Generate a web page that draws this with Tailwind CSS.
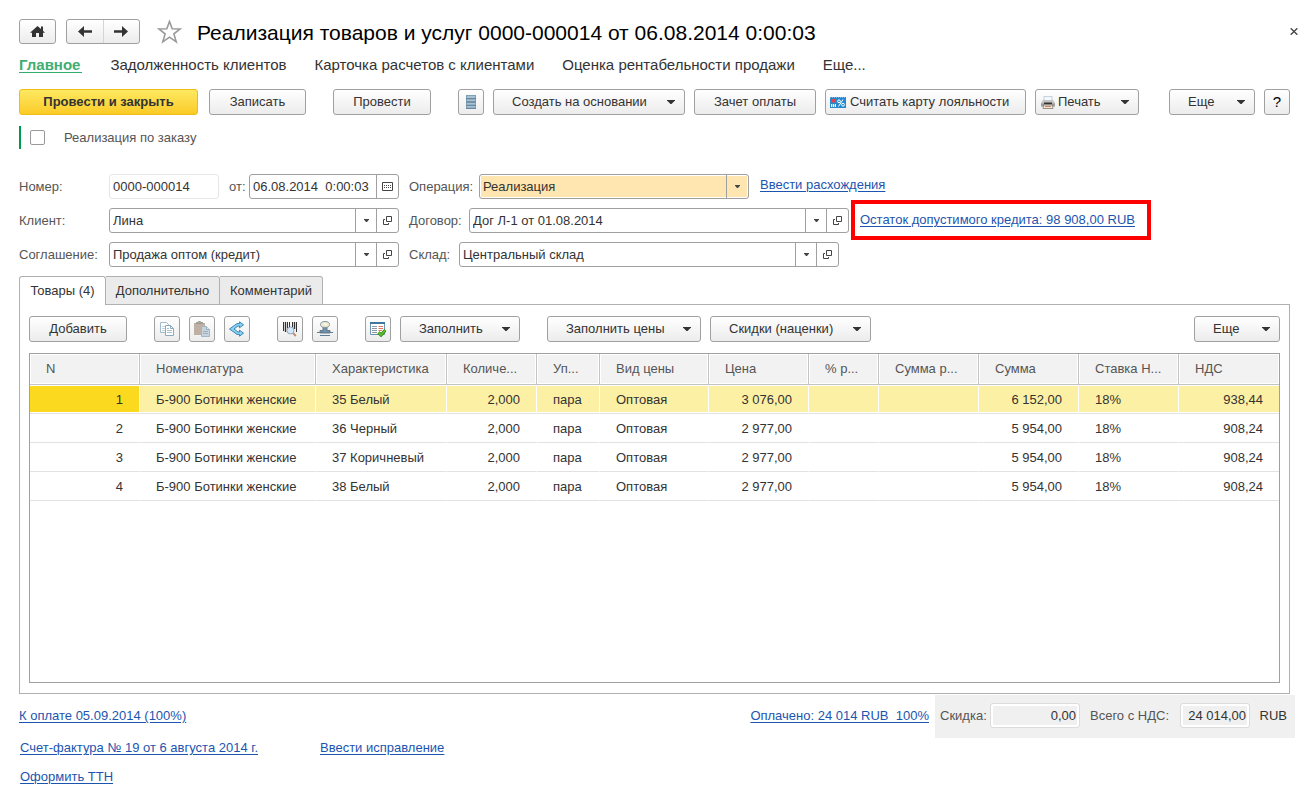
<!DOCTYPE html>
<html lang="ru">
<head>
<meta charset="utf-8">
<meta name="viewport" content="width=device-width, initial-scale=1">
<title>Реализация товаров и услуг 0000-000014</title>
<script src="https://cdn.jsdelivr.net/npm/@tailwindcss/browser@4"></script>
</head>
<body class="bg-white font-['Liberation_Sans',Arial,sans-serif] text-[13px] leading-4 text-[#333]">
<svg class="hidden" aria-hidden="true">
  <symbol id="caret" viewBox="0 0 8 4"><path d="M0 0h8v.5L4.500 4h-1L0 .5z" fill="#333"/></symbol>
  <symbol id="caret-sm" viewBox="0 0 5 3"><path d="M0 0h5v.5L3 3H2L0 .5z" fill="#444"/></symbol>
  <symbol id="open" viewBox="0 0 9 9"><path d="M3.500 .5h5v5h-5zM2 3.500H.5v5h5V7" fill="none" stroke="#444"/></symbol>
</svg>

<div class="flex min-h-screen flex-col pt-[19px] pr-[26px] pb-2 pl-[19px]">

  <!-- Title bar -->
  <header class="flex h-[25px] items-center">
    <button aria-label="Домой" class="flex h-[25px] w-[37px] items-center justify-center rounded-[3px] border border-[#a0a0a0] bg-linear-to-b from-white to-[#ececec]">
      <svg class="h-[11px] w-[15px]" viewBox="0 0 15 11"><path d="M7.500 0 11 3V.5h2v4.300l2 2h-2V11H9V7H6v4H2V6.800H0z" fill="#333"/></svg>
    </button>
    <div class="ml-2.5 flex h-[25px] w-[74px] rounded-[3px] border border-[#a0a0a0] bg-linear-to-b from-white to-[#ececec]">
      <button aria-label="Назад" class="flex flex-1 items-center justify-center border-r border-[#d5d5d5]">
        <svg class="h-[11px] w-[14px]" viewBox="0 0 14 11"><path d="M0 5.500 6 0v4.300h8v2.400H6V11z" fill="#333"/></svg>
      </button>
      <button aria-label="Вперед" class="flex flex-1 items-center justify-center">
        <svg class="h-[11px] w-[14px]" viewBox="0 0 14 11"><path d="M14 5.500 8 0v4.300H0v2.400h8V11z" fill="#333"/></svg>
      </button>
    </div>
    <button aria-label="В избранное" class="ml-[17px]">
      <svg class="h-[25px] w-[25px]" viewBox="0 0 25 25"><path d="M12.500 2.500l2.700 7.300 8 .2-6.300 4.900 2.300 7.900-6.700-4.600-6.700 4.600 2.300-7.900L1.800 10l8-.2z" fill="#fff" stroke="#999" stroke-width="1.600"/></svg>
    </button>
    <h1 class="ml-[15px] pt-0.5 text-[21px] leading-6 text-black">Реализация товаров и услуг 0000-000014 от 06.08.2014 0:00:03</h1>
    <button aria-label="Закрыть" class="-mr-2.5 ml-auto p-0.5">
      <svg class="h-[7px] w-[8px]" viewBox="0 0 8 7"><path d="M.7.300l6.600 6.400M7.300.300.7 6.700" stroke="#444" stroke-width="1.400"/></svg>
    </button>
  </header>

  <!-- Section links -->
  <nav class="mt-[11px] flex h-5 gap-7 text-[15px] leading-5">
    <a href="#" class="h-[18px] border-b border-[#2fae6b] pr-0.5 font-bold text-[#3fae72]">Главное</a>
    <a href="#">Задолженность клиентов</a>
    <a href="#">Карточка расчетов с клиентами</a>
    <a href="#">Оценка рентабельности продажи</a>
    <a href="#">Еще...</a>
  </nav>

  <!-- Document commands -->
  <div class="mt-3.5 flex h-[26px]">
    <button class="w-[179px] rounded-[3px] border border-[#f0bc1c] bg-linear-to-b from-[#fde95f] to-[#fbcb23] font-bold">Провести и закрыть</button>
    <button class="ml-[11px] w-[97px] rounded-[3px] border border-[#a0a0a0] bg-linear-to-b from-white to-[#ececec]">Записать</button>
    <button class="ml-[27px] w-[98px] rounded-[3px] border border-[#a0a0a0] bg-linear-to-b from-white to-[#ececec]">Провести</button>
    <button aria-label="Движения документа" class="ml-[27px] flex w-[26px] items-center justify-center rounded-[3px] border border-[#a0a0a0] bg-linear-to-b from-white to-[#ececec]">
      <svg class="h-[14px] w-[10px]" viewBox="0 0 10 14"><path d="M0 0h10v14H0z" fill="#7f9fb5"/><path d="M1 1h8v2H1zM1 4.500h8v1.500H1zM1 8h8v1.500H1zM1 11h8v1.500H1z" fill="#a9c2d3"/><path d="M0 3.500h10M0 7h10M0 10.500h10M0 13.500h10" stroke="#5f8299" stroke-width=".8"/></svg>
    </button>
    <button class="ml-[9px] flex w-[192px] items-center justify-between rounded-[3px] border border-[#a0a0a0] bg-linear-to-b from-white to-[#ececec] pr-[9px] pl-[18px]">Создать на основании<svg class="h-1 w-2"><use href="#caret"/></svg></button>
    <button class="ml-[9px] w-[122px] rounded-[3px] border border-[#a0a0a0] bg-linear-to-b from-white to-[#ececec]">Зачет оплаты</button>
    <button class="ml-[9px] flex w-[201px] items-center gap-1 rounded-[3px] border border-[#a0a0a0] bg-linear-to-b from-white to-[#ececec] pl-1">
      <svg class="h-[11px] w-4 shrink-0" viewBox="0 0 16 11"><path d="M0 0h16v11H0z" fill="#2489cf"/><path d="M0 .5h16" stroke="#7db9e4" stroke-dasharray="1 1"/><path d="M1.500 2h3.500v3.500H1.500z" fill="#e0434c"/><path d="M1 7h1.300v3H1zM3 7h1.300v3H3zM5 7h1v3H5z" fill="#fff"/><path d="M13 2.500l-4.500 7" stroke="#fff"/><circle cx="9" cy="4.300" r="1.400" fill="none" stroke="#fff"/><circle cx="13" cy="7.700" r="1.400" fill="none" stroke="#fff"/></svg>
      Считать карту лояльности</button>
    <button class="ml-[9px] flex w-[104px] items-center rounded-[3px] border border-[#a0a0a0] bg-linear-to-b from-white to-[#ececec] pr-[9px] pl-[5px]">
      <svg class="h-[13px] w-[14px]" viewBox="0 0 14 13"><path d="M3 .4h8V5H3z" fill="#f4f8fb" stroke="#a9bccb" stroke-width=".7"/><path d="M2 4h10l2 3v3H0V7z" fill="#c4c4c4"/><path d="M0 7.500h14v3H0z" fill="#9b9b9b"/><path d="M3 6.500h8V8H3z" fill="#333"/><path d="M2.500 9h9l.5 3.500H2z" fill="#f3e3d8" stroke="#7a6a60" stroke-width=".7"/><path d="M4 10.500h6" stroke="#c58a68"/></svg>
      <span class="ml-[3px]">Печать</span><svg class="ml-auto h-1 w-2"><use href="#caret"/></svg></button>
    <button class="ml-auto flex w-[86px] items-center justify-between rounded-[3px] border border-[#a0a0a0] bg-linear-to-b from-white to-[#ececec] pr-[9px] pl-[18px]">Еще<svg class="h-1 w-2"><use href="#caret"/></svg></button>
    <button aria-label="Справка" class="ml-[9px] w-[26px] rounded-[3px] border border-[#a0a0a0] bg-linear-to-b from-white to-[#ececec] text-[15px] text-black">?</button>
  </div>

  <label class="mt-[11px] flex h-[23px] items-center self-start border-l-2 border-[#009a4e] pl-[9px] text-[#555]">
    <input type="checkbox" class="mr-[19px] h-[15px] w-[15px] appearance-none rounded-[2px] border border-[#999] bg-white checked:bg-[#009a4e]">Реализация по заказу
  </label>

  <!-- Document fields -->
  <div class="mt-[25px] flex flex-col gap-[9px]">
    <div class="flex h-[25px] items-center">
      <label for="num" class="w-[90px] text-[#555]">Номер:</label>
      <input id="num" readonly value="0000-000014" class="h-[25px] w-[110px] rounded-[3px] border border-[#e6e6e6] px-[3px]">
      <label for="date" class="w-[30px] pl-2.5 text-[#555]">от:</label>
      <div class="flex h-[25px] w-[150px] rounded-[3px] border border-[#a0a0a0]">
        <input id="date" value="06.08.2014&nbsp; 0:00:03" class="w-0 flex-1 px-[3px]">
        <button aria-label="Календарь" class="flex w-[22px] items-center justify-center border-l border-[#a0a0a0]">
          <svg class="h-[9px] w-[11px]" viewBox="0 0 11 9"><path d="M.5.500h10v8H.5z" fill="none" stroke="#444"/><path d="M2 3.500h7M2 5.500h7" stroke="#444" stroke-dasharray="1 1"/></svg>
        </button>
      </div>
      <label for="op" class="w-20 pl-2.5 text-[#555]">Операция:</label>
      <div class="relative h-[25px] w-[270px]">
        <select id="op" class="h-[25px] w-full appearance-none rounded-[3px] border border-[#a0a0a0] bg-[#ffe5b0] px-[3px] inset-ring inset-ring-white"><option>Реализация</option></select>
        <span class="pointer-events-none absolute inset-y-px right-px flex w-[22px] items-center justify-center border-l border-[#a0a0a0]"><svg class="h-[3px] w-[5px]"><use href="#caret-sm"/></svg></span>
      </div>
      <a href="#" class="mb-1 ml-[11px] text-[#1c55b0] underline underline-offset-2">Ввести расхождения</a>
    </div>

    <div class="flex h-[25px] items-center">
      <label for="client" class="w-[90px] text-[#555]">Клиент:</label>
      <div class="flex h-[25px] w-[290px] rounded-[3px] border border-[#a0a0a0]">
        <input id="client" value="Лина" class="w-0 flex-1 px-[3px]">
        <button aria-label="Выбрать клиента" class="flex w-[21px] items-center justify-center border-l border-[#a0a0a0]"><svg class="h-[3px] w-[5px]"><use href="#caret-sm"/></svg></button>
        <button aria-label="Открыть клиента" class="flex w-[22px] items-center justify-center border-l border-[#a0a0a0]"><svg class="h-[9px] w-[9px]"><use href="#open"/></svg></button>
      </div>
      <label for="contract" class="w-[70px] pl-2.5 text-[#555]">Договор:</label>
      <div class="flex h-[25px] w-[380px] rounded-[3px] border border-[#a0a0a0]">
        <input id="contract" value="Дог Л-1 от 01.08.2014" class="w-0 flex-1 px-[3px]">
        <button aria-label="Выбрать договор" class="flex w-[21px] items-center justify-center border-l border-[#a0a0a0]"><svg class="h-[3px] w-[5px]"><use href="#caret-sm"/></svg></button>
        <button aria-label="Открыть договор" class="flex w-[22px] items-center justify-center border-l border-[#a0a0a0]"><svg class="h-[9px] w-[9px]"><use href="#open"/></svg></button>
      </div>
      <div class="-mt-[9px] -mb-2 ml-0.5 flex h-10 w-[300px] items-center border-4 border-[#fe0000] pl-[5px]">
        <a href="#" class="text-[#1c55b0] underline underline-offset-2">Остаток допустимого кредита: 98 908,00 RUB</a>
      </div>
    </div>

    <div class="flex h-[25px] items-center">
      <label for="terms" class="w-[90px] text-[#555]">Соглашение:</label>
      <div class="flex h-[25px] w-[290px] rounded-[3px] border border-[#a0a0a0]">
        <input id="terms" value="Продажа оптом (кредит)" class="w-0 flex-1 px-[3px]">
        <button aria-label="Выбрать соглашение" class="flex w-[21px] items-center justify-center border-l border-[#a0a0a0]"><svg class="h-[3px] w-[5px]"><use href="#caret-sm"/></svg></button>
        <button aria-label="Открыть соглашение" class="flex w-[22px] items-center justify-center border-l border-[#a0a0a0]"><svg class="h-[9px] w-[9px]"><use href="#open"/></svg></button>
      </div>
      <label for="store" class="w-[60px] pl-2.5 text-[#555]">Склад:</label>
      <div class="flex h-[25px] w-[380px] rounded-[3px] border border-[#a0a0a0]">
        <input id="store" value="Центральный склад" class="w-0 flex-1 px-[3px]">
        <button aria-label="Выбрать склад" class="flex w-[21px] items-center justify-center border-l border-[#a0a0a0]"><svg class="h-[3px] w-[5px]"><use href="#caret-sm"/></svg></button>
        <button aria-label="Открыть склад" class="flex w-[22px] items-center justify-center border-l border-[#a0a0a0]"><svg class="h-[9px] w-[9px]"><use href="#open"/></svg></button>
      </div>
    </div>
  </div>

  <!-- Tabs -->
  <div role="tablist" class="z-10 mt-[9px] -mb-px flex h-[29px]">
    <button role="tab" aria-selected="true" class="w-[87px] rounded-t-[3px] border border-b-0 border-[#b0b0b0] bg-white">Товары (4)</button>
    <button role="tab" aria-selected="false" class="w-[114px] rounded-tr-[3px] border border-l-0 border-[#b0b0b0] bg-[#ebebeb]">Дополнительно</button>
    <button role="tab" aria-selected="false" class="w-[103px] rounded-tr-[3px] border border-l-0 border-[#b0b0b0] bg-[#ebebeb]">Комментарий</button>
  </div>

  <section class="flex flex-1 flex-col border border-[#b0b0b0] px-[9px] pt-[11px] pb-2.5">
    <div class="flex h-[26px]">
      <button class="w-[98px] rounded-[3px] border border-[#a0a0a0] bg-linear-to-b from-white to-[#ececec]">Добавить</button>
      <div class="ml-[27px] flex gap-[9px]">
        <button aria-label="Копировать" class="flex w-[26px] items-center justify-center rounded-[3px] border border-[#a0a0a0] bg-linear-to-b from-white to-[#ececec]">
          <svg class="h-4 w-4" viewBox="0 0 16 16"><path d="M1.500 1.500h6l2 2v8h-8z" fill="#fff" stroke="#a3bccd"/><path d="M3 5.500h3M3 7.500h3M3 9.500h3" stroke="#c2d3df"/><path d="M6.500 4.500h5l3 3v7h-8z" fill="#fff" stroke="#8aaac0"/><path d="M11.500 4.500v3h3" fill="none" stroke="#8aaac0"/><path d="M8 9.500h5M8 11.500h5M8 7.500h2" stroke="#a9c2d3"/></svg>
        </button>
        <button aria-label="Вставить" class="flex w-[26px] items-center justify-center rounded-[3px] border border-[#a0a0a0] bg-linear-to-b from-white to-[#ececec]">
          <svg class="h-4 w-4" viewBox="0 0 16 16"><path d="M0 2h11v12H0z" fill="#bfb0a5"/><path d="M2.500 2.500V1.500h1.500l.5-1h2l.5 1h1.500v1z" fill="#b3b3ae" stroke="#999790"/><path d="M7.500 5.500h5l3 3v7h-8z" fill="#c7d3dc" stroke="#a3b6c4"/><path d="M12.500 5.500v3h3" fill="#dfe7ec" stroke="#9cb0bf"/><path d="M9 10.500h5M9 12.500h5" stroke="#9cb0bf"/></svg>
        </button>
        <button aria-label="Разбить строку" class="flex w-[26px] items-center justify-center rounded-[3px] border border-[#a0a0a0] bg-linear-to-b from-white to-[#ececec]">
          <svg class="h-4 w-4" viewBox="0 0 16 16"><path d="M.5 8 8 2.600h2.500V.8L14.500 3.800l-4 3V5H9L5 8l4 3h1.500V9.200l4 3-4 3v-1.800H8z" fill="#8fd0f3" stroke="#3487b5" stroke-linejoin="round"/></svg>
        </button>
      </div>
      <div class="ml-[27px] flex gap-[9px]">
        <button aria-label="Поиск по штрихкоду" class="flex w-[26px] items-center justify-center rounded-[3px] border border-[#a0a0a0] bg-linear-to-b from-white to-[#ececec]">
          <svg class="h-4 w-4" viewBox="0 0 16 16"><path d="M1.500 1v9M5.500 1v6M7.500 1v5M10.500 1v5M14.500 1v10" stroke="#333"/><path d="M3.500 1v10M12.500 1v7" stroke="#333" stroke-width="1.400"/><path d="M11 12l2.800 3" stroke="#c98d6c" stroke-width="2"/><circle cx="8.500" cy="9.500" r="3.500" fill="#d5e6f5" stroke="#8aa7c4"/></svg>
        </button>
        <button aria-label="Печать этикеток" class="flex w-[26px] items-center justify-center rounded-[3px] border border-[#a0a0a0] bg-linear-to-b from-white to-[#ececec]">
          <svg class="h-4 w-4" viewBox="0 0 16 16"><path d="M6 5h4v4.500h3V12H3V9.500h3z" fill="#7491a8" stroke="#4d6a80" stroke-width=".8"/><ellipse cx="8" cy="3.500" rx="4.500" ry="3" fill="#f1eacb" stroke="#7f96a6"/><path d="M7 2.500l3 1.500" stroke="#fff"/><path d="M0 11.500h16M3 14.500h10" stroke="#5f7d94"/></svg>
        </button>
      </div>
      <button aria-label="Проверить строки" class="ml-[27px] flex w-[26px] items-center justify-center rounded-[3px] border border-[#a0a0a0] bg-linear-to-b from-white to-[#ececec]">
        <svg class="h-4 w-4" viewBox="0 0 16 16"><path d="M.5 1.500h14v12H.5z" fill="#fff" stroke="#6c93b0"/><path d="M0 1h15v2H0z" fill="#3f789f"/><path d="M2 5.500h5M2 7.500h5M2 9.500h5M2 11.500h5" stroke="#8b9aa6"/><path d="M8.500 5.500H13M8.500 7.500H13M8.500 9.500H12" stroke="#e0785f"/><path d="M8.500 11.500 11 14l4.500-5" fill="none" stroke="#2d7d12" stroke-width="3.200"/><path d="M8.500 11.500 11 14l4.500-5" fill="none" stroke="#5fc12d" stroke-width="1.800"/></svg>
      </button>
      <button class="ml-[9px] flex w-[120px] items-center justify-between rounded-[3px] border border-[#a0a0a0] bg-linear-to-b from-white to-[#ececec] pr-[9px] pl-[18px]">Заполнить<svg class="h-1 w-2"><use href="#caret"/></svg></button>
      <button class="ml-[27px] flex w-[154px] items-center justify-between rounded-[3px] border border-[#a0a0a0] bg-linear-to-b from-white to-[#ececec] pr-[9px] pl-[18px]">Заполнить цены<svg class="h-1 w-2"><use href="#caret"/></svg></button>
      <button class="ml-[9px] flex w-[161px] items-center justify-between rounded-[3px] border border-[#a0a0a0] bg-linear-to-b from-white to-[#ececec] pr-[9px] pl-[18px]">Скидки (наценки)<svg class="h-1 w-2"><use href="#caret"/></svg></button>
      <button class="ml-auto flex w-[86px] items-center justify-between rounded-[3px] border border-[#a0a0a0] bg-linear-to-b from-white to-[#ececec] pr-[9px] pl-[18px]">Еще<svg class="h-1 w-2"><use href="#caret"/></svg></button>
    </div>

    <div class="mt-[11px] flex-1 border border-[#a0a0a0]">
      <table class="w-full table-fixed border-separate border-spacing-0 whitespace-nowrap">
        <colgroup>
          <col class="w-[110px]"><col class="w-[176px]"><col class="w-[131px]"><col class="w-[90px]"><col class="w-[63px]"><col class="w-[109px]"><col class="w-[100px]"><col class="w-[70px]"><col class="w-[100px]"><col class="w-[100px]"><col class="w-[100px]"><col>
        </colgroup>
        <thead class="text-left text-[#555] [&_th]:h-[31px] [&_th]:border-r [&_th]:border-b [&_th]:border-[#c4c4c4] [&_th]:bg-[#f2f2f2] [&_th]:pl-4 [&_th]:font-normal [&_th]:inset-ring [&_th]:inset-ring-white [&_th:last-child]:border-r-0">
          <tr><th>N</th><th>Номенклатура</th><th>Характеристика</th><th>Количе...</th><th>Уп...</th><th>Вид цены</th><th>Цена</th><th>% р...</th><th>Сумма р...</th><th>Сумма</th><th>Ставка Н...</th><th>НДС</th></tr>
        </thead>
        <tbody class="[&_td]:h-[29px] [&_td]:border-r [&_td]:border-b [&_td]:border-r-white [&_td]:border-b-[#e2e2e2] [&_td]:px-4 [&_td]:pt-0.5 [&_td:last-child]:border-r-0">
          <tr class="[&_td]:bg-[#fcf0a4] [&_td]:shadow-[inset_0_1px_white,inset_0_-1px_white]"><td class="bg-[#fbd91f]! text-right">1</td><td>Б-900 Ботинки женские</td><td>35 Белый</td><td class="text-right">2,000</td><td>пара</td><td>Оптовая</td><td class="text-right">3 076,00</td><td></td><td></td><td class="text-right">6 152,00</td><td>18%</td><td class="text-right">938,44</td></tr>
          <tr><td class="text-right">2</td><td>Б-900 Ботинки женские</td><td>36 Черный</td><td class="text-right">2,000</td><td>пара</td><td>Оптовая</td><td class="text-right">2 977,00</td><td></td><td></td><td class="text-right">5 954,00</td><td>18%</td><td class="text-right">908,24</td></tr>
          <tr><td class="text-right">3</td><td>Б-900 Ботинки женские</td><td>37 Коричневый</td><td class="text-right">2,000</td><td>пара</td><td>Оптовая</td><td class="text-right">2 977,00</td><td></td><td></td><td class="text-right">5 954,00</td><td>18%</td><td class="text-right">908,24</td></tr>
          <tr><td class="text-right">4</td><td>Б-900 Ботинки женские</td><td>38 Белый</td><td class="text-right">2,000</td><td>пара</td><td>Оптовая</td><td class="text-right">2 977,00</td><td></td><td></td><td class="text-right">5 954,00</td><td>18%</td><td class="text-right">908,24</td></tr>
        </tbody>
      </table>
    </div>
  </section>

  <!-- Totals and linked documents -->
  <footer class="mt-px text-[#1c55b0]">
    <div class="-mr-[5px] flex h-[43px] items-center">
      <a href="#" class="mb-0.5 underline underline-offset-2">К оплате 05.09.2014 (100%)</a>
      <a href="#" class="mr-1.5 mb-0.5 ml-auto underline underline-offset-2">Оплачено: 24 014 RUB&nbsp; 100%</a>
      <div class="flex h-[43px] w-[360px] items-center bg-[#f0f0f0] pr-2 pb-0.5 pl-[5px] text-[#555]">
        <label for="disc" class="w-[50px]">Скидка:</label>
        <input id="disc" readonly value="0,00" class="h-[25px] w-[90px] rounded-[3px] border border-[#dcdcdc] bg-[#f0f0f0] px-[3px] text-right text-[#333] inset-ring-2 inset-ring-white">
        <label for="total" class="ml-2.5 w-[90px]">Всего с НДС:</label>
        <input id="total" readonly value="24 014,00" class="h-[25px] w-[70px] rounded-[3px] border border-[#dcdcdc] bg-[#f0f0f0] px-[3px] text-right text-[#333] inset-ring-2 inset-ring-white">
        <span class="ml-auto text-[#333]">RUB</span>
      </div>
    </div>
    <div class="mt-px flex h-[18px] items-center pl-px">
      <a href="#" class="w-[300px]"><span class="underline underline-offset-2">Счет-фактура № 19 от 6 августа 2014 г.</span></a>
      <a href="#" class="underline underline-offset-2">Ввести исправление</a>
    </div>
    <div class="mt-[11px] flex h-[18px] items-center pl-px">
      <a href="#" class="underline underline-offset-2">Оформить ТТН</a>
    </div>
  </footer>
</div>
</body>
</html>
